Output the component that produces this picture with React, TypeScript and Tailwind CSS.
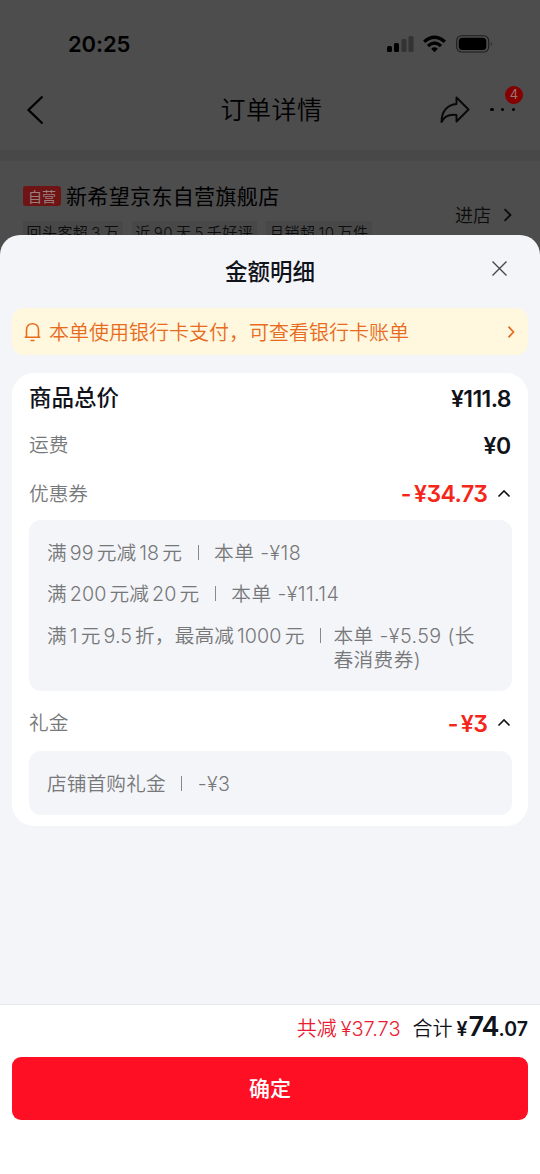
import React from "react";

type Line = { label: string; value: string };

const couponLines: Line[] = [
  { label: "满99元减18元", value: "本单 -¥18" },
  { label: "满200元减20元", value: "本单 -¥11.14" },
  { label: "满1元9.5折，最高减1000元", value: "本单 -¥5.59 (长春消费券)" },
];

const giftLines: Line[] = [{ label: "店铺首购礼金", value: "-¥3" }];

const shopTags = ["回头客超3万", "近90天5千好评", "月销超10万件"];

// Adds a little air between digits and the characters around them
function Spaced({ text }: { text: string }) {
  return (
    <>
      {text.split(/([\d.]+)/).map((part, idx) =>
        idx % 2 ? (
          <span key={idx} className="mx-[3px]">{part}</span>
        ) : (
          <span key={idx}>{part}</span>
        )
      )}
    </>
  );
}

function StatusBar() {
  return (
    <div className="flex h-[72px] items-center pt-4 pl-[68px] pr-[47px]">
      <span className="text-[22px] font-semibold leading-none tracking-[-0.1px]">20:25</span>
      <svg className="ml-auto" width="106" height="18" viewBox="0 0 106 18">
        <rect x="0" y="11" width="5" height="6" rx="1.5" />
        <rect x="7" y="8" width="5" height="9" rx="1.5" />
        <rect x="14.500" y="4" width="5" height="13" rx="1.5" fill="#333" />
        <rect x="21.500" y="1" width="5" height="16" rx="1.5" fill="#333" />
        <g fill="none" stroke="#000" strokeWidth="3.300">
          <path d="M37.200 6.800 Q47.500 -2.400 57.800 6.800" />
          <path d="M41 11 Q47.500 5 54 11" />
        </g>
        <path d="M44.200 13.700 Q47.500 11 50.800 13.700 L47.500 17.200 Z" />
        <rect x="69.700" y="0.700" width="32" height="16.300" rx="5" fill="none" stroke="#1d1d1d" strokeWidth="1.100" />
        <rect x="71.800" y="2.700" width="27.500" height="12.300" rx="3.500" />
        <path d="M103.800 6.500 q1.800 2.300 0 4.600 Z" fill="#1c1c1c" />
      </svg>
    </div>
  );
}

function PageHeader() {
  return (
    <div className="relative mb-[3px] flex h-[75px] items-center pl-6 pr-[23px]">
      <svg width="22" height="30" viewBox="0 0 22 30" fill="none" stroke="#000" strokeWidth="2.300">
        <path d="M18.500 1.500 L4.500 15 L18.500 28.500" />
      </svg>
      <h1 className="absolute inset-x-0 pl-[3px] pt-0.5 text-center text-[25px] font-[350] leading-none tracking-[0.500px]">订单详情</h1>
      <svg className="ml-auto" width="32" height="30" viewBox="0 0 32 30" fill="none" stroke="#080808" strokeWidth="1.900" strokeLinejoin="round">
        <path d="M17.500 2.500 L29.500 14.500 L17.500 26.500 V20 C10 19 5 21.500 2.500 27 C2.500 17 8 9.500 17.500 9 Z" />
      </svg>
      <div className="relative ml-[18px] flex w-7 items-center justify-between pl-px pr-0.5">
        <i className="size-[3.500px] rounded-full bg-black" />
        <i className="size-[3.500px] rounded-full bg-black" />
        <i className="size-[3.500px] rounded-full bg-black" />
        <span className="absolute -top-[22px] left-4 flex size-[18px] items-center justify-center rounded-full bg-[#850000] text-[13px] text-[#9b7474]">4</span>
      </div>
    </div>
  );
}

function Shop() {
  return (
    <div className="flex h-20 pl-[23px] pr-[27px] pt-[23px]">
      <div>
        <div className="flex h-6 items-center">
          <span className="flex h-5 w-[38px] items-center justify-center rounded-[3px] bg-[#6f1415] text-[14px] text-[#9c8080]">自营</span>
          <span className="ml-[5px] pt-px text-[21px] font-normal leading-6 tracking-[0.350px]">新希望京东自营旗舰店</span>
        </div>
        <div className="mt-[12px] flex gap-[9px] pt-px text-[15px] font-[350] leading-6 tracking-[0.450px] text-[#0c0c0c]">
          {shopTags.map((tag) => (
            <span key={tag} className="bg-[#484848] px-[3.500px]"><Spaced text={tag} /></span>
          ))}
        </div>
      </div>
      <div className="ml-auto mt-[19px] flex h-6 items-center self-start text-[18px] font-[350] text-[#0c0c0c]">
        进店
        <svg className="ml-[11px]" width="11" height="14" viewBox="0 0 11 14" fill="none" stroke="#0c0c0c" strokeWidth="1.800">
          <path d="M2.500 1.200 L8.500 7 L2.500 12.800" />
        </svg>
      </div>
    </div>
  );
}

function CaretUp() {
  return (
    <svg className="ml-[9px]" width="14" height="10" viewBox="0 0 14 10" fill="none" stroke="#15161a" strokeWidth="1.700">
      <path d="M1.500 6.500 L7 1 L12.500 6.500" />
    </svg>
  );
}

function Discount({ amount }: { amount: string }) {
  return (
    <span className="flex items-center pr-[1.500px] text-[#f52619]">
      <span className="text-[23px] font-semibold leading-none tracking-[-0.500px] [font-feature-settings:'cv09']">
        <span className="mr-[3px]">-</span>¥{amount}
      </span>
      <CaretUp />
    </span>
  );
}

function DetailBox({ lines }: { lines: Line[] }) {
  return (
    <ul className="flex flex-col gap-[17.500px] rounded-xl bg-[#f4f5f9] px-[18px] pt-[20.500px] pb-[19.500px] text-[19.700px] font-[350] leading-6 text-[#77787a]">
      {lines.map((line) => (
        <li key={line.label} className="flex">
          <span className="shrink-0 whitespace-nowrap tracking-[0.100px]"><Spaced text={line.label} /></span>
          <i className={line.label.length > 12 ? "mt-[4px] mr-[12px] ml-4 h-[15px] w-px shrink-0 bg-[#88898b]" : "mx-[15.500px] mt-[4px] h-[15px] w-px shrink-0 bg-[#88898b]"} />
          <span className="max-w-[150px] break-all tracking-[0.400px]">{line.value}</span>
        </li>
      ))}
    </ul>
  );
}

export default function App() {
  return (
    <div className="h-[1174px] w-[540px] overflow-hidden bg-[#4d4d4d] font-[Inter,'Noto_Sans_CJK_SC',sans-serif] text-black">
      <StatusBar />
      <PageHeader />
      <div className="h-[11px] bg-[#484848]" />
      <Shop />

      {/* Amount details sheet */}
      <div className="relative -mt-[6px] flex h-[939px] flex-col rounded-t-[20px] bg-[#f4f5f9]">
        <div className="relative flex h-[73px] items-center justify-center">
          <h2 className="pt-px text-[22.500px] font-medium text-[#11131a]">金额明细</h2>
          <svg className="absolute top-[25px] right-8" width="17" height="17" viewBox="0 0 17 17" stroke="#44464b" strokeWidth="1.400">
            <path d="M1.500 1.500 L15.500 15.500 M15.500 1.500 L1.500 15.500" />
          </svg>
        </div>

        <div className="mx-3 flex h-[47px] items-center rounded-xl bg-[#fff7de] px-3 text-[#e76c20]">
          <svg width="17" height="20" viewBox="0 0 17 20" fill="none" stroke="currentColor" strokeWidth="1.600">
            <path d="M0.700 15.300 H16.300 M2.500 15.300 V8 C2.500 4.200 5 1.700 8.500 1.700 S14.500 4.200 14.500 8 V15.300 M6.500 18.500 H10.500" />
          </svg>
          <span className="ml-2 pt-0.5 text-[20px] font-[350] leading-none">本单使用银行卡支付，可查看银行卡账单</span>
          <svg className="ml-auto" width="10" height="14" viewBox="0 0 10 14" fill="none" stroke="currentColor" strokeWidth="1.700">
            <path d="M2.500 1.700 L7.500 7 L2.500 12.300" />
          </svg>
        </div>

        <div className="mx-3 mt-[18px] rounded-[22px] bg-white pr-4 pb-[11px] pl-[17px] text-[19.700px] text-[#77787a]">
          <div className="flex h-[50px] items-center justify-between text-[#11131a]">
            <span className="text-[22.500px] font-medium">商品总价</span>
            <span className="pt-0.5 pr-px text-[23px] font-semibold tracking-[-0.600px]">¥111.8</span>
          </div>
          <div className="flex h-11 items-center justify-between pt-0.5 font-[350]">
            <span>运费</span>
            <span className="pr-px text-[23px] font-semibold tracking-[-0.300px] text-[#11131a]">¥0</span>
          </div>
          <div className="flex h-[53px] items-center justify-between pt-0.5 font-[350]">
            <span>优惠券</span>
            <Discount amount="34.73" />
          </div>
          <DetailBox lines={couponLines} />
          <div className="flex h-[60px] items-center justify-between pt-[6px] font-[350]">
            <span>礼金</span>
            <Discount amount="3" />
          </div>
          <DetailBox lines={giftLines} />
        </div>

        <div className="mt-auto h-[170px] border-t border-[#e6e7ea] bg-white px-3">
          <div className="flex h-[52px] items-baseline justify-end pt-0.5 text-[20px] font-[350]">
            <span className="text-[#e91c32]">共减<span className="ml-1">¥37.73</span></span>
            <span className="ml-3 text-[#11131a]">合计</span>
            <span className="ml-1 text-[19.500px] font-semibold text-[#11131a]">
              ¥<span className="ml-px text-[27px] font-semibold tracking-[-1px]">74</span>.07
            </span>
          </div>
          <button className="h-[63px] w-full rounded-[9px] bg-[#ff0f23] pt-px text-[21px] font-medium text-white">确定</button>
        </div>
      </div>
    </div>
  );
}
